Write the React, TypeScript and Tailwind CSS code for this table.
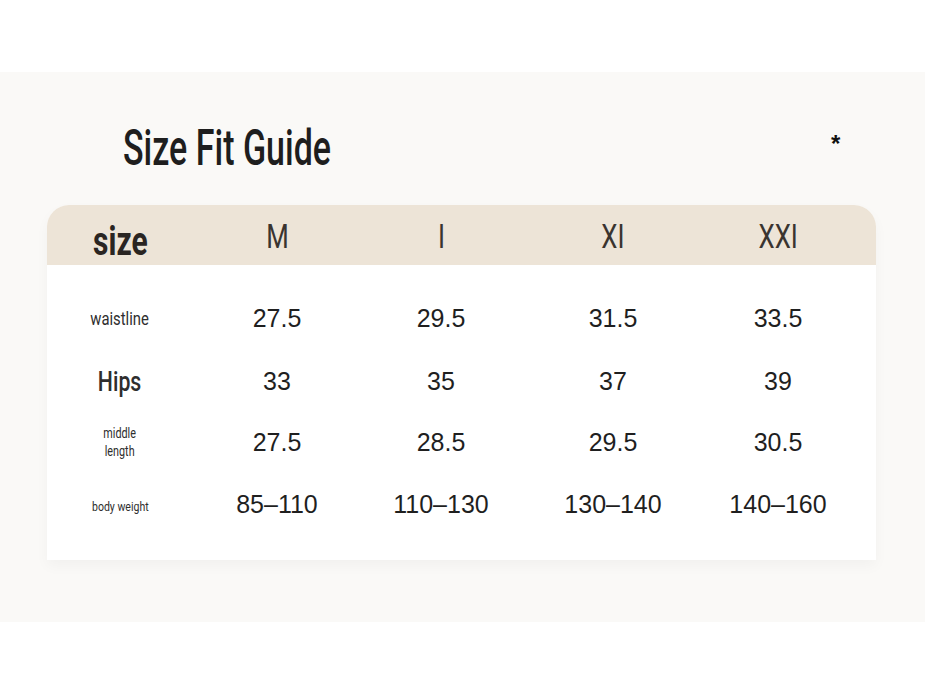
const cond = "inline-block font-['Roboto',sans-serif]";

const rows = [
  { label: 'waistline', cls: 'text-[19px] scale-x-[0.78]', values: ['27.5', '29.5', '31.5', '33.5'] },
  { label: 'Hips', cls: 'text-[28px] font-medium scale-x-[0.76]', values: ['33', '35', '37', '39'] },
  { label: 'middle\nlength', cls: 'text-[15px] leading-[18px] scale-x-[0.72]', values: ['27.5', '28.5', '29.5', '30.5'] },
  { label: 'body weight', cls: 'text-[13.5px] scale-x-[0.78]', values: ['85–110', '110–130', '130–140', '140–160'] },
];

const cols = 'grid grid-cols-[146px_168px_160px_184px_146px]';

export default function App() {
  return (
    <div className="w-[925px] h-[694px] bg-white overflow-hidden">
      <div className="mt-[72px] h-[550px] bg-[#faf9f7] pt-[133px] relative">
        <h1 className={`${cond} absolute left-[123px] top-[51px] text-[50px] leading-none font-medium text-[#1e1e1e] scale-x-[0.68] origin-left whitespace-nowrap`}>
          Size Fit Guide
        </h1>
        <span className="absolute left-[831px] top-[60px] text-[24px] leading-none text-[#111] font-['Liberation_Sans',sans-serif] font-bold">*</span>

        <div className="mx-[47px] w-[829px] rounded-t-[22px] bg-white shadow-[0_6px_14px_rgba(0,0,0,0.035)]">
          <div className={`${cols} h-[60px] items-center rounded-t-[22px] bg-[#ede4d7]`}>
            <div className="text-center pt-[16px]">
              <span className={`${cond} text-[40px] leading-none font-bold text-[#2a2522] scale-x-[0.75]`}>size</span>
            </div>
            {['M', 'I', 'XI', 'XXI'].map((s) => (
              <div key={s} className="text-center pt-[5px]">
                <span className={`${cond} text-[33px] leading-none text-[#3a3430] scale-x-[0.78]`}>{s}</span>
              </div>
            ))}
            <div />
          </div>
          <div className="pt-[29px] pb-[18px]">
            {rows.map((r) => (
              <div key={r.label} className={`${cols} h-[62px] items-center`}>
                <div className="text-center">
                  <span className={`${cond} whitespace-pre-line text-[#2e2e2e] ${r.cls}`}>{r.label}</span>
                </div>
                {r.values.map((v, i) => (
                  <div key={i} className="text-center text-[25px] text-[#1f1f1f] font-['Liberation_Sans',Arial,sans-serif]">
                    {v}
                  </div>
                ))}
                <div />
              </div>
            ))}
          </div>
        </div>
      </div>
    </div>
  );
}
